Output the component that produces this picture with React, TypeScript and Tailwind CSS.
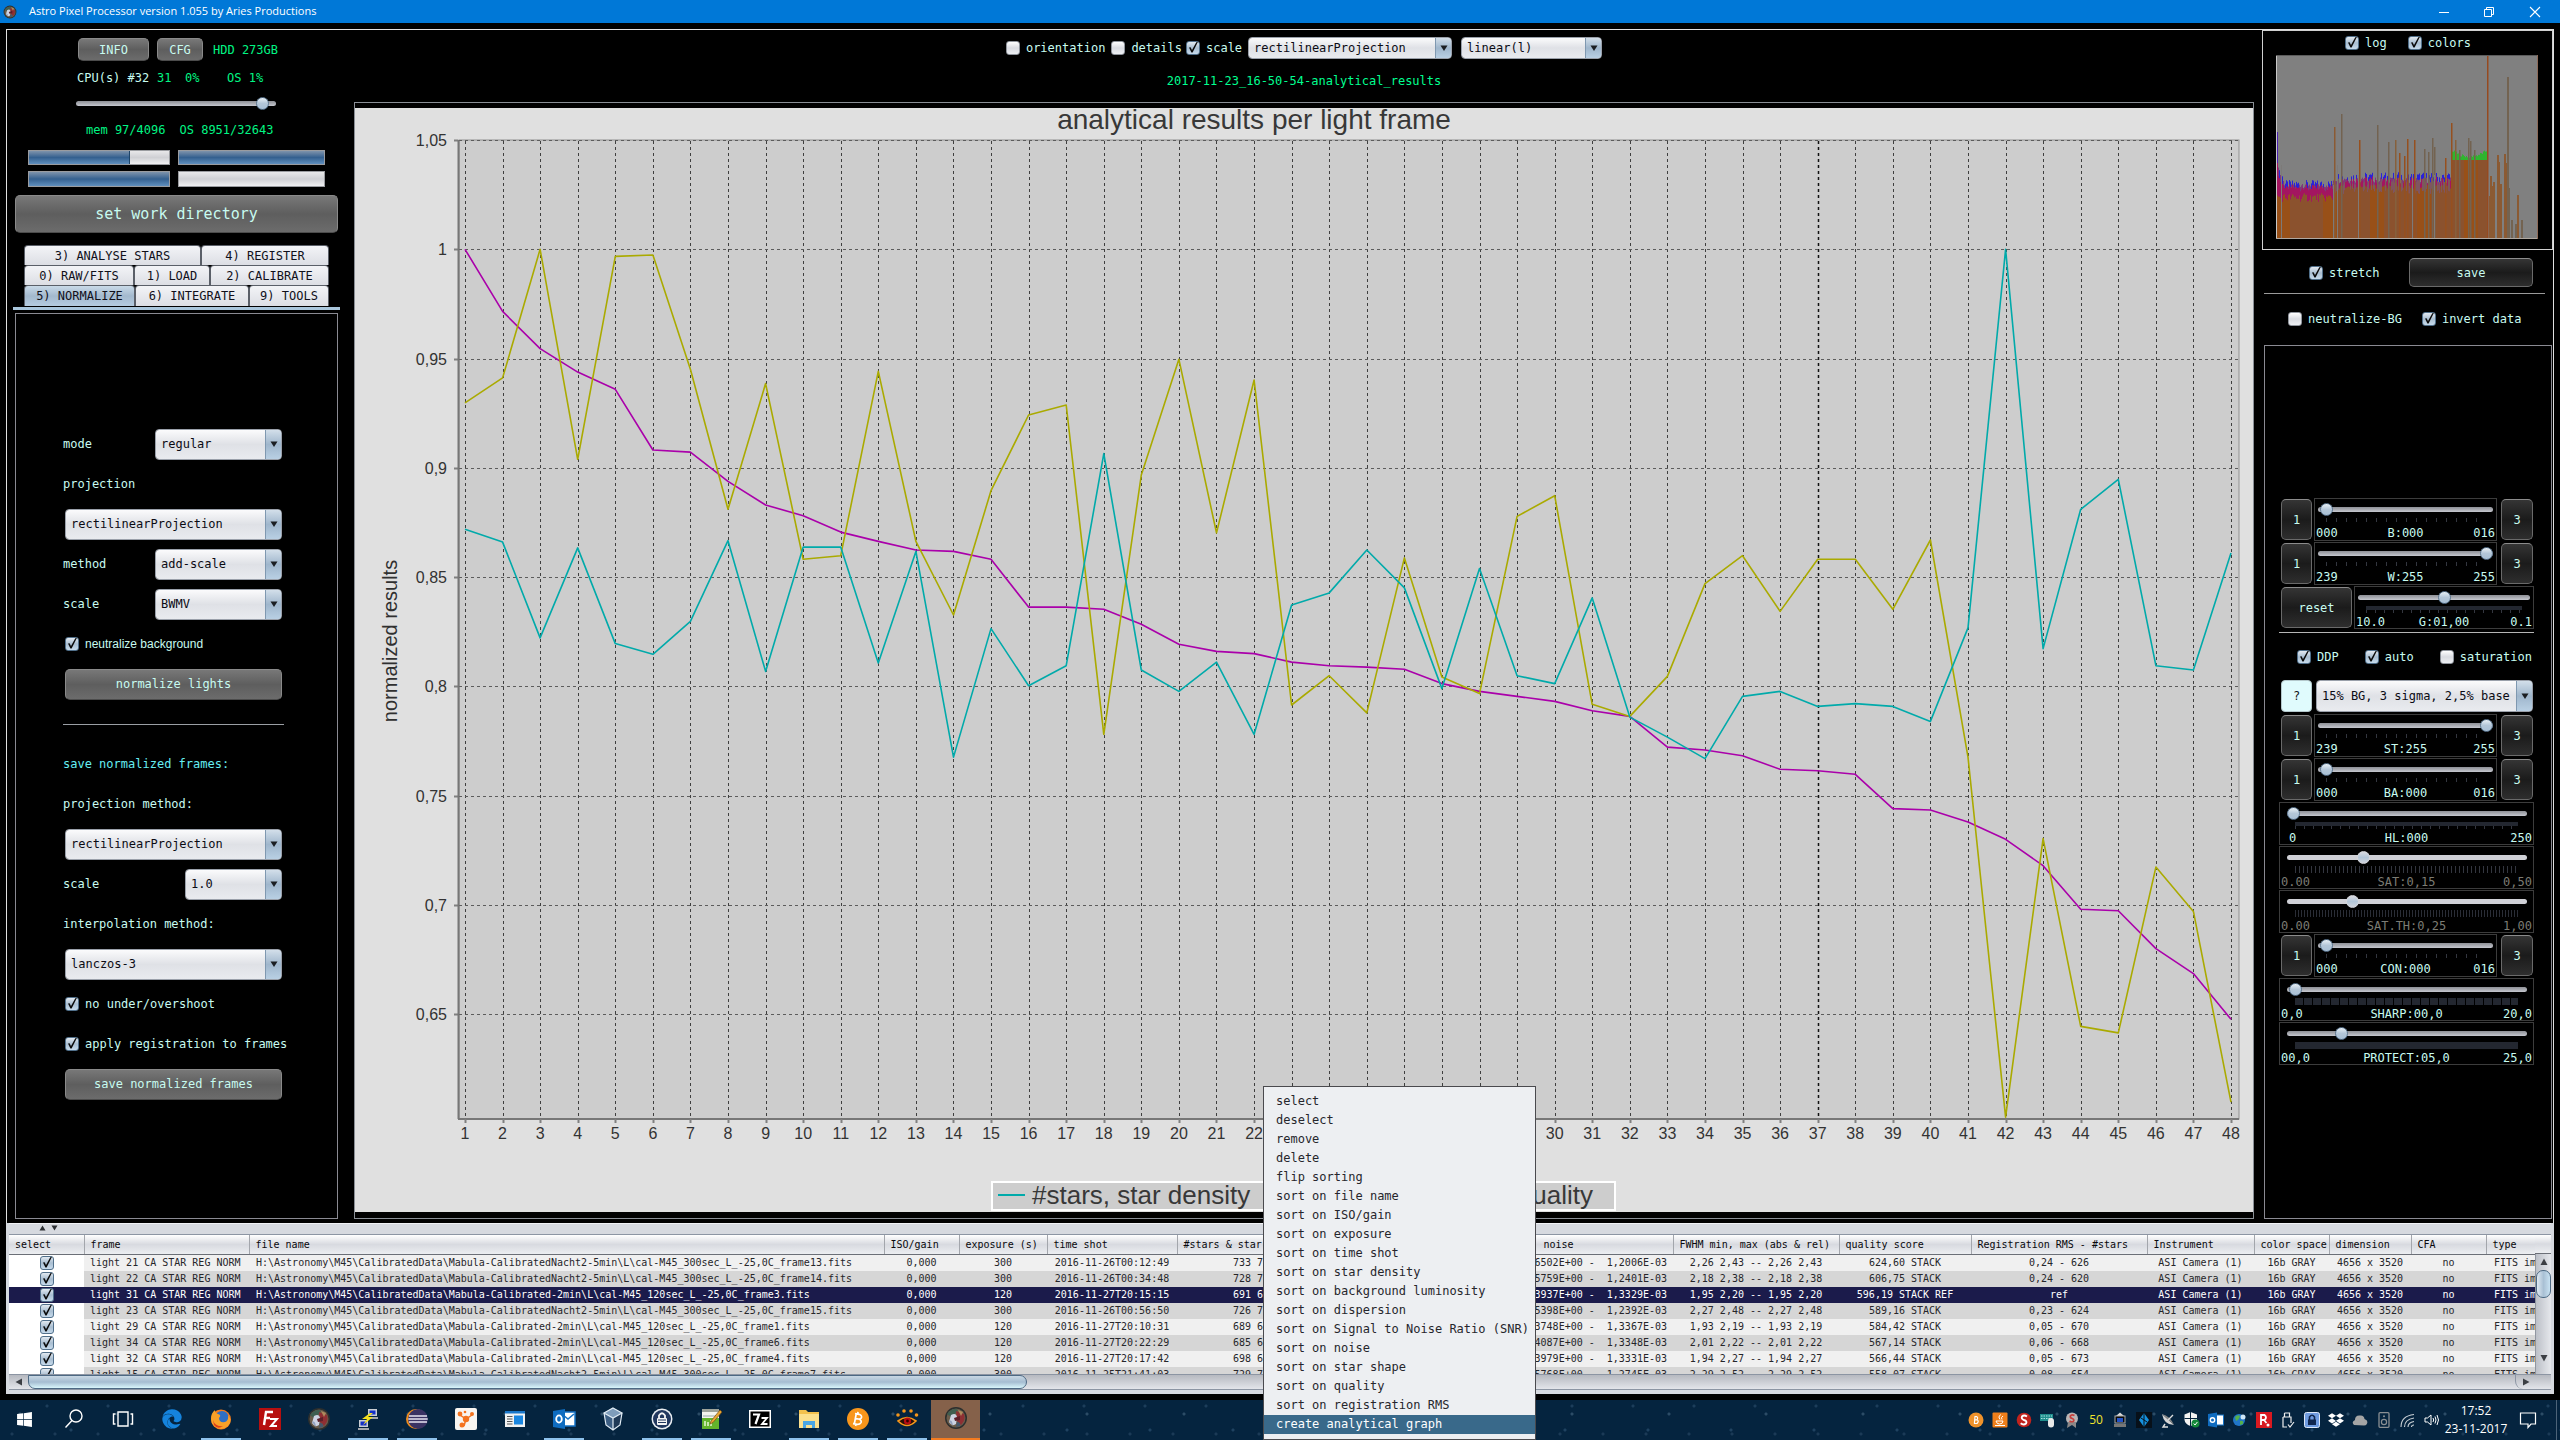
import type { ReactNode } from "react";
import { FaWindows, FaEdge, FaDropbox } from "react-icons/fa";

/* ---------- shared controls ---------- */

const CYAN = "text-[#c8fbf0]";

function Check({ id, label, checked = false, sans = false }: { id: string; label?: string; checked?: boolean; sans?: boolean }) {
  return (
    <label htmlFor={id} className="flex items-center gap-1.5 whitespace-nowrap">
      <span className="relative block size-3.5 shrink-0">
        <input
          id={id}
          type="checkbox"
          defaultChecked={checked}
          aria-label={label ?? id}
          className="peer block size-3.5 appearance-none rounded-[3px] border border-[#8f949c] bg-linear-to-b from-[#ffffff] via-[#d9dbe1] to-[#eef0f4] checked:border-[#51708b] checked:from-[#e3eaf1] checked:via-[#a9bed1] checked:to-[#c7dbec]"
        />
        <svg viewBox="0 0 14 14" className="pointer-events-none absolute inset-0 hidden size-3.5 overflow-visible peer-checked:block">
          <path d="M3 6.5 L4.6 6.2 L6 9 L10.3 1.2 L12 0.8 L6.6 11.5 L5.4 11.5 Z" fill="#0c0c0c" />
        </svg>
      </span>
      {label && (sans ? <span className="font-['Liberation_Sans',sans-serif]">{label}</span> : <span>{label}</span>)}
    </label>
  );
}

function Drop({ id, value, className }: { id: string; value: string; className: string }) {
  return (
    <span className={`relative block overflow-hidden rounded-[4px] border border-[#9aa0aa] ${className}`}>
      <select
        id={id}
        aria-label={id}
        className="block size-full appearance-none bg-linear-to-b from-[#fbfbfc] via-[#dfe1e6] to-[#e9ebef] pl-[5px] text-[#0b0b14] outline-none"
      >
        <option>{value}</option>
      </select>
      <span className="pointer-events-none absolute inset-y-0 right-0 flex w-4 items-center justify-center border-l border-[#7f98b0] bg-linear-to-b from-[#d3dfea] via-[#9fb6cc] to-[#b9d0e4]">
        <svg viewBox="0 0 8 6" className="h-1.5 w-2">
          <path d="M0.5 0.5 H7.5 L4 6 Z" fill="#1b1e22" />
        </svg>
      </span>
    </span>
  );
}

function GrayButton({ children, className }: { children: ReactNode; className: string }) {
  return (
    <button className={`rounded-[5px] border border-[#8a8a8a] border-b-[#4c4c4c] bg-linear-to-b from-[#787878] via-[#5e5e5e] to-[#6c6c6c] ${CYAN} ${className}`}>
      {children}
    </button>
  );
}

function DarkButton({ children, className }: { children: ReactNode; className: string }) {
  return (
    <button className={`shrink-0 rounded-[5px] border border-[#6a6a6a] border-t-[#8c8c8c] bg-linear-to-b from-[#353535] via-[#1b1b1b] to-[#2e2e2e] ${CYAN} ${className}`}>
      {children}
    </button>
  );
}

function Range({ id, value, max = 100, muted = false }: { id: string; value: number; max?: number; muted?: boolean }) {
  return (
    <span className="relative flex h-3.5 w-full items-center">
      <span className={muted ? "h-[5px] w-full rounded-full bg-[#cfd0d6]" : "h-[5px] w-full rounded-full bg-linear-to-b from-[#8e9096] to-[#c5c7cf]"} />
      <input
        id={id}
        type="range"
        min={0}
        max={max}
        defaultValue={value}
        disabled={muted}
        aria-label={id}
        className="absolute inset-0 m-0 h-3.5 w-full appearance-none bg-transparent [&::-webkit-slider-thumb]:size-[13px] [&::-webkit-slider-thumb]:appearance-none [&::-webkit-slider-thumb]:rounded-full [&::-webkit-slider-thumb]:border [&::-webkit-slider-thumb]:border-[#5b7690] [&::-webkit-slider-thumb]:bg-linear-to-b [&::-webkit-slider-thumb]:from-[#e8eff5] [&::-webkit-slider-thumb]:via-[#b3c6d8] [&::-webkit-slider-thumb]:to-[#a9c0d6] disabled:[&::-webkit-slider-thumb]:border-[#d6d7dc] disabled:[&::-webkit-slider-thumb]:from-[#d8dae0] disabled:[&::-webkit-slider-thumb]:to-[#cfd3dc]"
      />
    </span>
  );
}

/* ---------- left column ---------- */

function Tab({ label, width, active = false }: { label: string; width: string; active?: boolean }) {
  return (
    <button
      role="tab"
      aria-selected={active}
      className={`${width} rounded-t-[4px] border border-b-0 border-[#5a5f68] text-[#10101a] ${active ? "bg-linear-to-b from-[#c9dae8] via-[#a3b9ce] to-[#b4cbdf]" : "bg-linear-to-b from-[#f3f4f7] to-[#dcdee4]"}`}
    >
      {label}
    </button>
  );
}

function Progress({ className, fill }: { className: string; fill: string }) {
  return (
    <div className={`border border-[#9a9ca0] bg-linear-to-b from-[#e8e8ea] via-[#cfd0d4] to-[#f0f0f2] ${className}`}>
      <div className={`h-full bg-linear-to-b from-[#7e93ab] via-[#34608f] to-[#5f8fbe] ${fill}`} />
    </div>
  );
}

function Row({ children }: { children: ReactNode }) {
  return <div className="flex h-10 items-center justify-between">{children}</div>;
}

function LeftColumn() {
  return (
    <aside className="flex w-[347px] shrink-0 flex-col">
      <div className="mt-2 ml-[71px] flex h-[23px] items-center">
        <GrayButton className="h-full w-[71px]">INFO</GrayButton>
        <GrayButton className="ml-2 h-full w-[46px]">CFG</GrayButton>
        <span className="ml-2.5 text-[#00f584]">HDD 273GB</span>
      </div>
      <div className="mt-[9px] ml-[70px] flex h-4 items-center text-[#00f584]">
        <span className={`${CYAN} w-20`}>CPU(s) #32</span>
        <span className="w-7">31</span>
        <span className="w-[42px]">0%</span>
        <span>OS 1%</span>
      </div>
      <div className="mt-2.5 ml-[69px] w-[200px]">
        <Range id="cpu-limit" value={96} />
      </div>
      <div className="mt-3 ml-[79px] flex h-4 items-center gap-3.5 text-[#00f584]">
        <span>mem 97/4096</span>
        <span>OS 8951/32643</span>
      </div>
      <div className="mt-3 ml-[21px] flex gap-2">
        <Progress className="h-[15px] w-[142px]" fill="w-[72%] border-r border-[#1d4468]" />
        <Progress className="h-[15px] w-[147px]" fill="w-full" />
      </div>
      <div className="mt-1.5 ml-[21px] flex gap-2">
        <Progress className="h-4 w-[142px]" fill="w-full" />
        <Progress className="h-4 w-[147px]" fill="w-0" />
      </div>
      <GrayButton className="mt-2 ml-2 h-[38px] w-[323px] text-[15px]">set work directory</GrayButton>
      <div role="tablist" className="mt-3 ml-[17px] flex w-[305px] flex-col">
        <div className="flex h-5">
          <Tab label="3) ANALYSE STARS" width="w-[177px]" />
          <Tab label="4) REGISTER" width="flex-1" />
        </div>
        <div className="flex h-5">
          <Tab label="0) RAW/FITS" width="w-[110px]" />
          <Tab label="1) LOAD" width="w-[76px]" />
          <Tab label="2) CALIBRATE" width="flex-1" />
        </div>
        <div className="flex h-[21px]">
          <Tab label="5) NORMALIZE" width="w-[111px]" active />
          <Tab label="6) INTEGRATE" width="w-[114px]" />
          <Tab label="9) TOOLS" width="flex-1" />
        </div>
      </div>
      <div className="mt-px ml-1.5 h-[3px] w-[327px] bg-[#a9c6dc]" />
      <section className={`mt-[3px] mb-1 ml-2 w-[323px] flex-1 border border-[#8a8a92] pt-[110px] pr-[55px] pl-[47px] ${CYAN}`}>
        <Row>
          <label htmlFor="mode">mode</label>
          <Drop id="mode" value="regular" className="h-[31px] w-[127px]" />
        </Row>
        <Row>
          <label htmlFor="projection">projection</label>
        </Row>
        <Row>
          <Drop id="projection" value="rectilinearProjection" className="ml-0.5 h-[31px] flex-1" />
        </Row>
        <Row>
          <label htmlFor="method">method</label>
          <Drop id="method" value="add-scale" className="h-[31px] w-[127px]" />
        </Row>
        <Row>
          <label htmlFor="scale-type">scale</label>
          <Drop id="scale-type" value="BWMV" className="h-[31px] w-[127px]" />
        </Row>
        <div className="ml-0.5 flex h-10 items-center">
          <Check id="neutralize-background" label="neutralize background" checked sans />
        </div>
        <Row>
          <GrayButton className="ml-0.5 h-[31px] flex-1">normalize lights</GrayButton>
        </Row>
        <Row>
          <hr className="-mr-0.5 flex-1 border-[#9a9ea4]" />
        </Row>
        <div className="flex h-10 items-center text-[#66eef2]">save normalized frames:</div>
        <Row>
          <label htmlFor="projection-method">projection method:</label>
        </Row>
        <Row>
          <Drop id="projection-method" value="rectilinearProjection" className="ml-0.5 h-[31px] flex-1" />
        </Row>
        <Row>
          <label htmlFor="scale-factor">scale</label>
          <Drop id="scale-factor" value="1.0" className="h-[31px] w-[97px]" />
        </Row>
        <Row>
          <label htmlFor="interpolation">interpolation method:</label>
        </Row>
        <Row>
          <Drop id="interpolation" value="lanczos-3" className="ml-0.5 h-[31px] flex-1" />
        </Row>
        <div className="ml-0.5 flex h-10 items-center">
          <Check id="no-overshoot" label="no under/overshoot" checked />
        </div>
        <div className="ml-0.5 flex h-10 items-center">
          <Check id="apply-registration" label="apply registration to frames" checked />
        </div>
        <Row>
          <GrayButton className="ml-0.5 h-[31px] flex-1">save normalized frames</GrayButton>
        </Row>
      </section>
    </aside>
  );
}

/* ---------- chart ---------- */

const STARS = [601, 619, 753, 627, 761, 776, 730, 617, 800, 626, 626, 788, 632, 920, 740, 820, 792, 495, 798, 828, 787, 888, 707, 690, 630, 683, 824, 656, 806, 817, 697, 864, 892, 922, 835, 828, 849, 845, 849, 870, 739, 209, 768, 573, 531, 792, 798, 634];
const QUALITY = [209, 296, 348, 381, 405, 490, 493, 534, 567, 582, 605, 618, 630, 632, 643, 710, 710, 713, 734, 762, 772, 775, 787, 792, 794, 797, 817, 828, 835, 842, 855, 863, 906, 910, 918, 937, 939, 944, 992, 994, 1011, 1035, 1072, 1133, 1135, 1188, 1223, 1287];
const NOISE = [424, 389, 209, 503, 219, 217, 377, 573, 397, 643, 638, 380, 618, 721, 547, 441, 427, 888, 525, 363, 606, 392, 847, 806, 858, 641, 808, 831, 583, 554, 846, 863, 807, 677, 638, 716, 643, 643, 713, 616, 920, 1424, 1034, 1297, 1306, 1074, 1136, 1403];

const frameX = (n: number) => 110 + ((n - 1) * 1766) / 47;
const levelY = (u: number) => (u * 5) / 7 - 8;
const line = (data: number[]) => data.map((u, i) => `${frameX(i + 1).toFixed(1)},${levelY(u).toFixed(1)}`).join(" ");

const LEVELS: [string, number][] = [
  ["1,05", 56], ["1", 209], ["0,95", 362], ["0,9", 515], ["0,85", 668],
  ["0,8", 821], ["0,75", 974], ["0,7", 1127], ["0,65", 1280],
];

function Chart() {
  const frames = Array.from({ length: 48 }, (_, i) => i + 1);
  return (
    <svg viewBox="0 0 1898 1104" className="block min-h-0 w-full flex-1 bg-[#e0e0e0] font-['Liberation_Sans',sans-serif]" role="img" aria-label="analytical results per light frame">
      <text x="899" y="21" textAnchor="middle" fontSize="28" fill="#383838">analytical results per light frame</text>
      <rect x="104" y="32" width="1780" height="979" fill="#cdcdcd" stroke="#909090" />
      {frames.map((n) => (
        <line key={n} x1={Math.round(frameX(n)) + 0.5} x2={Math.round(frameX(n)) + 0.5} y1="33" y2="1011" stroke={n === 37 ? "#111111" : "#3f3f3f"} strokeWidth={n === 37 ? 1.5 : 1} strokeDasharray="3 3" />
      ))}
      {LEVELS.map(([t, u]) => (
        <g key={t}>
          <line x1="104" x2="1884" y1={Math.round(levelY(u)) + 0.5} y2={Math.round(levelY(u)) + 0.5} stroke="#5c5c5c" strokeDasharray="3 3" />
          <line x1="99" x2="103" y1={Math.round(levelY(u)) + 0.5} y2={Math.round(levelY(u)) + 0.5} stroke="#808080" strokeWidth="2" />
          <text x="92" y={Math.round(levelY(u)) + 6} textAnchor="end" fontSize="16" fill="#333333">{t}</text>
        </g>
      ))}
      <path d="M103.5 32 V1011 M103 1011 H1884" stroke="#777777" strokeWidth="2" fill="none" />
      {frames.map((n) => (
        <g key={n}>
          <line x1={Math.round(frameX(n)) + 0.5} x2={Math.round(frameX(n)) + 0.5} y1="1011" y2="1015" stroke="#808080" strokeWidth="2" />
          <text x={frameX(n)} y="1031" textAnchor="middle" fontSize="16" fill="#333333">{n}</text>
        </g>
      ))}
      <g fill="none" strokeWidth="1.6" strokeLinejoin="round">
        <polyline points={line(QUALITY)} stroke="#aa00aa" />
        <polyline points={line(NOISE)} stroke="#aaaa00" />
        <polyline points={line(STARS)} stroke="#00aaaa" />
      </g>
      <text transform="translate(42 533) rotate(-90)" textAnchor="middle" fontSize="20" fill="#303030">normalized results</text>
      <rect x="637" y="1074" width="623" height="28" fill="#cdcdcd" stroke="#ffffff" strokeWidth="2" />
      <line x1="643" x2="670" y1="1087" y2="1087" stroke="#00aaaa" strokeWidth="2" />
      <text x="677" y="1096" fontSize="26" fill="#383838">#stars, star density</text>
      <text x="1238" y="1096" fontSize="26" textAnchor="end" fill="#383838">quality</text>
    </svg>
  );
}

function CenterColumn() {
  return (
    <main className="flex min-w-0 flex-1 flex-col">
      <div className={`flex h-9 items-center justify-center ${CYAN}`}>
        <Check id="orientation" label="orientation" />
        <span className="w-1.5" />
        <Check id="details" label="details" />
        <span className="w-1" />
        <Check id="scale" label="scale" checked />
        <Drop id="view-projection" value="rectilinearProjection" className="ml-1.5 h-[22px] w-[204px]" />
        <Drop id="view-mode" value="linear(l)" className="ml-[9px] h-[22px] w-[141px]" />
      </div>
      <p className="mt-[5px] h-5 text-center leading-5 text-[#00ff90]">2017-11-23_16-50-54-analytical_results</p>
      <div className="mt-[11px] mb-1 flex min-h-0 flex-1 flex-col border border-[#8a8f96] pt-[5px] pb-1.5">
        <Chart />
      </div>
    </main>
  );
}

/* ---------- right column ---------- */

const noise = (i: number) => {
  const v = Math.sin(i * 12.9898) * 43758.5453;
  return v - Math.floor(v);
};

const HISTOGRAM_SPIKES: [number, number, string][] = [
  [58, 111, "#8b5a33"], [65, 124, "#736351"], [83, 98, "#96501f"], [101, 113, "#736351"], [112, 96, "#736351"], [119, 98, "#86603c"],
  [123, 85, "#96501f"], [128, 82, "#96501f"], [131, 99, "#96501f"], [138, 98, "#96501f"], [148, 89, "#736351"], [152, 86, "#736351"],
  [156, 100, "#736351"], [158, 91, "#736351"], [169, 80, "#96501f"], [175, 115, "#96501f"], [179, 98, "#86603c"], [183, 88, "#736351"],
  [192, 100, "#736351"], [194, 97, "#736351"], [198, 88, "#736351"], [211, 183, "#964a20"], [214, 62, "#8b5a33"], [217, 56, "#8b5a33"],
  [221, 83, "#8b5a33"], [224, 54, "#8b5a33"], [228, 84, "#8b5a33"], [231, 161, "#736351"], [235, 18, "#736351"], [239, 14, "#736351"],
  [241, 43, "#8b5a33"], [245, 18, "#736351"], [213, 42, "#8b5a33"], [216, 52, "#8b5a33"], [222, 76, "#8b5a33"], [229, 75, "#8b5a33"], [232, 50, "#736351"],
];

function Histogram() {
  const bars: ReactNode[] = [];
  for (let x = 1; x < 211; x++) {
    const a = noise(x);
    const b = noise(x + 400);
    const late = x >= 175;
    const early = x < 57;
    const top = late ? 80 + Math.abs(x - 193) * Math.abs(x - 193) * 0.02 + a * 3 : early ? 50 + a * 8 + (x < 8 ? 40 / x : 0) : 55 + a * 11;
    const base = late ? 78 : early ? 36 + b * 9 : 44 + b * 9;
    const mid = late ? 78 : base + (top - base) * 0.7;
    bars.push(
      <g key={x}>
        <rect x={x} y={183 - top} width="1" height={top} fill={late ? "#2fb52f" : a > 0.5 ? "#2a22d8" : "#7d3a7a"} />
        <rect x={x} y={183 - mid} width="1" height={mid} fill={late ? "#924b22" : early || b > 0.6 ? "#a31560" : "#7f5560"} />
        <rect x={x} y={183 - base} width="1" height={base} fill={x % 47 < 14 ? "#985018" : "#8b522e"} />
      </g>
    );
  }
  return (
    <svg viewBox="0 0 262 184" className="ml-[13px] block h-[184px] w-[262px]" role="img" aria-label="histogram">
      <rect width="262" height="184" fill="#808080" />
      {bars}
      {HISTOGRAM_SPIKES.map(([x, h, c]) => (
        <rect key={x} x={x} y={183 - h} width={x > 211 ? 2 : 1.5} height={h} fill={c} />
      ))}
      <path d="M1.5 77 V108" stroke="#4a1fb0" />
      <path d="M5.5 110 V183 M57.5 130 V183 M61.5 110 V183 M82.5 120 V183 M136.5 120 V183 M158.5 120 V183" stroke="#7d7a78" />
      <path d="M0.5 184 V0" stroke="#c8c8c8" />
      <path d="M0 0.5 H262" stroke="#5c5c5c" />
      <path d="M0 183.5 H262" stroke="#b0a8a0" />
      <path d="M261.5 0 V184" stroke="#8d6a58" />
    </svg>
  );
}

type TickKind = "sparse" | "bar" | "dense" | "denser" | "blocks" | "solid";

function Ticks({ kind }: { kind: TickKind }) {
  if (kind === "solid") return <span className="block h-[7px] bg-[#232730]" />;
  if (kind === "blocks") return <span className="block h-[7px] bg-[repeating-linear-gradient(90deg,#232730_0_8px,transparent_8px_9px)]" />;
  if (kind === "denser") return <span className="block h-[7px] bg-[repeating-linear-gradient(90deg,#2a2d36_0_1px,transparent_1px_3px)]" />;
  if (kind === "dense") return <span className="block h-[7px] bg-[repeating-linear-gradient(90deg,#33363f_0_1px,transparent_1px_4px)]" />;
  if (kind === "bar")
    return (
      <span className="block h-[7px]">
        <span className="block h-1 bg-[#232730]" />
        <span className="block h-[3px] bg-[repeating-linear-gradient(90deg,#33363f_0_1px,transparent_1px_9px)]" />
      </span>
    );
  return <span className="block h-1 bg-[repeating-linear-gradient(90deg,#33363f_0_1px,transparent_1px_10px)]" />;
}

type Slider = { name: string; lo: string; mid: string; hi: string; value: number; ticks: TickKind; muted?: boolean; wide?: boolean };

function SliderBox({ name, lo, mid, hi, value, ticks, muted = false, wide = false }: Slider) {
  return (
    <div className={`flex h-[43px] min-w-0 flex-col border border-[#3c3c3c] ${wide ? "w-full shrink-0" : "flex-1"}`}>
      <div className={`mt-[3px] ${wide ? "pr-1.5 pl-[7px]" : "px-[3px]"}`}>
        <Range id={name} value={value} muted={muted} />
      </div>
      <div className={`mt-0.5 h-[7px] ${wide ? "mx-[15px]" : "mx-[11px]"}`}>
        <Ticks kind={ticks} />
      </div>
      <div className={`mt-0.5 grid h-[14px] grid-cols-[1fr_auto_1fr] items-center px-px leading-[14px] ${muted ? "text-[#7c7c74]" : CYAN}`}>
        <span className={lo.length < 2 ? "pl-2" : ""}>{lo}</span>
        <label htmlFor={name}>{mid}</label>
        <span className="text-right">{hi}</span>
      </div>
    </div>
  );
}

function StepSlider(props: Slider) {
  return (
    <div className="flex items-center pr-px pl-0.5">
      <DarkButton className="h-[41px] w-[31px]">1</DarkButton>
      <span className="w-0.5" />
      <SliderBox {...props} />
      <DarkButton className="ml-1 h-[41px] w-8">3</DarkButton>
    </div>
  );
}

function RightColumn() {
  return (
    <aside className={`flex w-[299px] shrink-0 flex-col ${CYAN}`}>
      <div className="ml-2 border border-[#d0d0d0] pb-2.5">
        <div className="flex h-6 items-center gap-[21px] pl-[82px]">
          <Check id="log" label="log" checked />
          <Check id="colors" label="colors" checked />
        </div>
        <Histogram />
      </div>
      <div className="mt-2 flex h-[29px] items-center justify-between pr-5 pl-[55px]">
        <Check id="stretch" label="stretch" checked />
        <DarkButton className="h-full w-[124px]">save</DarkButton>
      </div>
      <hr className="mt-1.5 mr-2 ml-2.5 border-[#9a9a9a]" />
      <div className="mt-[15px] flex h-5 items-center gap-5 pl-[34px]">
        <Check id="neutralize-bg" label="neutralize-BG" />
        <Check id="invert-data" label="invert data" checked />
      </div>
      <section className="mt-4 mr-px mb-1 ml-2.5 flex flex-1 flex-col gap-px border border-[#8a8a92] pt-[152px] pr-[17px] pl-3.5">
        <StepSlider name="B" lo="000" mid="B:000" hi="016" value={1} ticks="sparse" />
        <StepSlider name="W" lo="239" mid="W:255" hi="255" value={100} ticks="sparse" />
        <div className="flex items-center pl-0.5">
          <DarkButton className="mr-0.5 h-[41px] w-[71px]">reset</DarkButton>
          <SliderBox name="G" lo="10.0" mid="G:01,00" hi="0.1" value={50} ticks="bar" />
        </div>
        <hr className="mt-0.5 border-[#b5b5b5]" />
        <div className="mt-[13px] flex h-5 items-center justify-between pr-0.5 pl-[18px]">
          <Check id="ddp" label="DDP" checked />
          <Check id="auto" label="auto" checked />
          <Check id="saturation" label="saturation" />
        </div>
        <div className="mt-3 mb-px flex h-8 items-center pr-px pl-0.5">
          <button className="h-full w-[31px] rounded-[4px] border border-[#b4c8cc] bg-[#e0fbfd] text-[#101418]">?</button>
          <Drop id="ddp-preset" value="15% BG, 3 sigma, 2,5% base" className="ml-1 h-full flex-1" />
        </div>
        <StepSlider name="ST" lo="239" mid="ST:255" hi="255" value={100} ticks="sparse" />
        <StepSlider name="BA" lo="000" mid="BA:000" hi="016" value={1} ticks="sparse" />
        <SliderBox name="HL" lo="0" mid="HL:000" hi="250" value={0} ticks="bar" wide />
        <SliderBox name="SAT" lo="0.00" mid="SAT:0,15" hi="0,50" value={31} ticks="dense" muted wide />
        <SliderBox name="SAT.TH" lo="0.00" mid="SAT.TH:0,25" hi="1,00" value={26} ticks="denser" muted wide />
        <StepSlider name="CON" lo="000" mid="CON:000" hi="016" value={1} ticks="sparse" />
        <SliderBox name="SHARP" lo="0,0" mid="SHARP:00,0" hi="20,0" value={1} ticks="blocks" wide />
        <SliderBox name="PROTECT" lo="00,0" mid="PROTECT:05,0" hi="25,0" value={21} ticks="solid" wide />
      </section>
    </aside>
  );
}

/* ---------- frame table ---------- */

const COLUMNS: [string, string][] = [
  ["select", "w-[75px]"], ["frame", "w-[165px]"], ["file name", "w-[635px]"], ["ISO/gain", "w-[75px]"], ["exposure (s)", "w-[88px]"],
  ["time shot", "w-[130px]"], ["#stars & star density", "w-[356px]"], ["noise", "w-[140px]"], ["FWHM min, max (abs & rel)", "w-[166px]"],
  ["quality score", "w-[132px]"], ["Registration RMS - #stars", "w-[176px]"], ["Instrument", "w-[107px]"], ["color space", "w-[75px]"],
  ["dimension", "w-[82px]"], ["CFA", "w-[75px]"], ["type", "w-[49px]"],
];

const LONG = "H:\\Astronomy\\M45\\CalibratedData\\Mabula-CalibratedNacht2-5min\\L\\cal-M45_300sec_L_-25,0C_frame";
const SHORT = "H:\\Astronomy\\M45\\CalibratedData\\Mabula-Calibrated-2min\\L\\cal-M45_120sec_L_-25,0C_frame";

const ROWS: string[][] = [
  ["21", LONG + "13", "300", "2016-11-26T00:12:49", "733 7", "6502E+00 -  1,2006E-03", "2,26 2,43 -- 2,26 2,43", "624,60 STACK", "0,24 - 626"],
  ["22", LONG + "14", "300", "2016-11-26T00:34:48", "728 7", "5759E+00 -  1,2401E-03", "2,18 2,38 -- 2,18 2,38", "606,75 STACK", "0,24 - 620"],
  ["31", SHORT + "3", "120", "2016-11-27T20:15:15", "691 6", "3937E+00 -  1,3329E-03", "1,95 2,20 -- 1,95 2,20", "596,19 STACK REF", "ref"],
  ["23", LONG + "15", "300", "2016-11-26T00:56:50", "726 7", "5398E+00 -  1,2392E-03", "2,27 2,48 -- 2,27 2,48", "589,16 STACK", "0,23 - 624"],
  ["29", SHORT + "1", "120", "2016-11-27T20:10:31", "689 6", "3748E+00 -  1,3367E-03", "1,93 2,19 -- 1,93 2,19", "584,42 STACK", "0,05 - 670"],
  ["34", SHORT + "6", "120", "2016-11-27T20:22:29", "685 6", "4087E+00 -  1,3348E-03", "2,01 2,22 -- 2,01 2,22", "567,14 STACK", "0,06 - 668"],
  ["32", SHORT + "4", "120", "2016-11-27T20:17:42", "698 6", "3979E+00 -  1,3331E-03", "1,94 2,27 -- 1,94 2,27", "566,44 STACK", "0,05 - 673"],
  ["15", LONG + "7", "300", "2016-11-25T21:41:03", "729 7", "5768E+00 -  1,2745E-03", "2,29 2,52 -- 2,29 2,52", "558,07 STACK", "0,08 - 654"],
];

function FrameTable() {
  return (
    <section className="mx-1.5 mb-1.5 flex h-[171px] shrink-0 flex-col bg-[#d6d9df] px-[3px] pb-1 text-[10px]">
      <div className="flex h-[9px] shrink-0 items-center border-t border-[#f0f1f4] pl-[30px]">
        <svg viewBox="0 0 20 6" className="h-1.5 w-5">
          <path d="M0.5 5.5 H6.5 L3.5 0.5 Z M12.5 0.5 H18.5 L15.5 5.5 Z" fill="#2c2f33" />
        </svg>
      </div>
      <div className="mt-0.5 flex min-h-0 flex-1 overflow-hidden border-t border-[#8c95a3]">
        <div className="min-w-0 flex-1 overflow-hidden">
          <table className="w-full min-w-[2526px] table-fixed border-collapse whitespace-pre">
            <colgroup>
              {COLUMNS.map(([name, w]) => (
                <col key={name} className={w} />
              ))}
            </colgroup>
            <thead>
              <tr className="h-[19px] bg-linear-to-b from-[#ffffff] via-[#d8dae0] to-[#eceef1]">
                {COLUMNS.map(([name], i) => (
                  <th key={name} className={`overflow-hidden border-r border-b border-r-[#a3a6ac] border-b-[#6b6f77] p-0 text-left font-normal text-[#08080c] last:border-r-0 ${i === 7 ? "pl-2.5" : "pl-1.5"}`}>{name}</th>
                ))}
              </tr>
            </thead>
            <tbody>
              {ROWS.map((r, i) => (
                <tr key={r[0]} className={`h-4 text-center leading-4 ${i === 2 ? "bg-[#1b1b4b] text-white" : i % 2 ? "bg-[#d6d6d6] text-[#26262a]" : "bg-[#f0f0f0] text-[#26262a]"}`}>
                  <td className={`p-0 ${i === 2 ? "" : "bg-white"}`}>
                    <span className="flex justify-center"><Check id={`select frame ${r[0]}`} checked /></span>
                  </td>
                  <td className="overflow-hidden p-0 pl-1.5 text-left">{`light ${r[0]} CA STAR REG NORM`}</td>
                  <td className="overflow-hidden p-0 pl-[7px] text-left">{`${r[1]}.fits`}</td>
                  <td className="p-0">0,000</td>
                  <td className="p-0">{r[2]}</td>
                  <td className="p-0">{r[3]}</td>
                  <td className="p-0 pl-14 text-left">{r[4]}</td>
                  <td className="p-0 pr-1.5 text-right">{r[5]}</td>
                  <td className="p-0">{r[6]}</td>
                  <td className="p-0">{r[7]}</td>
                  <td className="p-0">{r[8]}</td>
                  <td className="p-0">ASI Camera (1)</td>
                  <td className="p-0">16b GRAY</td>
                  <td className="p-0">4656 x 3520</td>
                  <td className="p-0">no</td>
                  <td className="overflow-hidden p-0 pl-2 text-left">FITS image</td>
                </tr>
              ))}
            </tbody>
          </table>
        </div>
        <div className="flex w-4 shrink-0 flex-col items-center">
          <div className="h-[19px] w-full border-b border-[#6b6f77] bg-linear-to-b from-[#ffffff] via-[#d8dae0] to-[#eceef1]" />
          <div className="flex w-full flex-1 flex-col items-center justify-between border-l border-[#9096a0] bg-linear-to-r from-[#bcc0c8] to-[#e6e8ec]">
            <svg viewBox="0 0 8 8" className="mt-1 size-2 shrink-0"><path d="M0.5 7 H7.5 L4 0.5 Z" fill="#3c3f44" /></svg>
            <div className="mt-1 mb-auto h-7 w-full rounded-[7px] border border-[#4d6983] bg-linear-to-r from-[#dfe9f2] via-[#a9c0d4] to-[#c9e2f2]" />
            <svg viewBox="0 0 8 8" className="mb-3 size-2 shrink-0"><path d="M0.5 1 H7.5 L4 7.5 Z" fill="#3c3f44" /></svg>
          </div>
        </div>
      </div>
      <div className="flex h-4 shrink-0 items-stretch border-y border-[#8c95a3] bg-linear-to-b from-[#b6b9c0] to-[#e3e5ea]">
        <span className="flex w-[19px] items-center justify-center">
          <svg viewBox="0 0 8 8" className="size-2"><path d="M7 0.5 V7.5 L0.5 4 Z" fill="#3c3f44" /></svg>
        </span>
        <div className="w-[39.3%] rounded-r-xl rounded-bl-xl border border-[#4d6983] bg-linear-to-b from-[#c9d8e4] via-[#a5bdd1] to-[#d9f6fb]" />
        <span className="mr-4 ml-auto flex w-5 items-center justify-center rounded-bl-lg border-l border-[#8c95a3]">
          <svg viewBox="0 0 8 8" className="size-2"><path d="M1 0.5 V7.5 L7.5 4 Z" fill="#3c3f44" /></svg>
        </span>
      </div>
    </section>
  );
}

/* ---------- context menu ---------- */

const MENU = [
  "select", "deselect", "remove", "delete", "flip sorting", "sort on file name", "sort on ISO/gain", "sort on exposure", "sort on time shot",
  "sort on star density", "sort on background luminosity", "sort on dispersion", "sort on Signal to Noise Ratio (SNR)", "sort on noise",
  "sort on star shape", "sort on quality", "sort on registration RMS", "create analytical graph",
];

function ContextMenu() {
  return (
    <div role="menu" className="absolute bottom-0 left-[1263px] flex w-[273px] flex-col border border-[#4a4a4e] bg-[#edeff2] pt-[5px] pb-[5px]">
      {MENU.map((m, i) => (
        <button key={m} role="menuitem" className={`h-[19px] pl-3 text-left leading-[19px] whitespace-nowrap ${i === MENU.length - 1 ? "bg-[#39698a] text-white" : "text-[#26262c]"}`}>
          {m}
        </button>
      ))}
    </div>
  );
}

/* ---------- taskbar ---------- */

function AppLogo() {
  return (
    <svg viewBox="0 0 24 24" className="size-6">
      <circle cx="12" cy="12" r="11" fill="#2c2f2e" />
      <circle cx="12" cy="12" r="9.5" fill="#6a5c4a" />
      <path d="M3 8 Q9 1 14 4 Q11 9 7 11 Z" fill="#3f5e50" />
      <path d="M12 5 L20 8 Q22 14 17 19 L13 15 Z" fill="#8e2f33" />
      <path d="M14 4 L19 6 L17 10 Z" fill="#b08a5c" />
      <path d="M7 9 Q12 6 13 11 L12 18 Q8 21 5 16 Z" fill="#cdd3e2" />
      <path d="M10 12 L16 10 L16 14 L11 15 Z" fill="#5d1f2a" />
      <path d="M5 15 Q8 13 9 20 Z" fill="#8fa0bd" />
      <path d="M13 16 Q17 16 16 20 L12 21 Z" fill="#46586c" />
    </svg>
  );
}

const G = ({ children }: { children: ReactNode }) => <svg viewBox="0 0 24 24" className="size-6">{children}</svg>;

const TASKS: { name: string; open?: boolean; active?: boolean; icon: ReactNode }[] = [
  { name: "Start", icon: <FaWindows className="size-[17px] text-white" /> },
  { name: "Search", icon: <G><circle cx="14" cy="9" r="6" fill="none" stroke="#fff" strokeWidth="1.4" /><path d="M10 13.5 L3.5 20.5" stroke="#fff" strokeWidth="1.4" /></G> },
  { name: "Task view", icon: <G><path d="M7 5 H17 V19 H7 Z M4.5 7 H2.5 V17 H4.5 M19.5 7 H21.5 V17 H19.5" fill="none" stroke="#fff" strokeWidth="1.4" /></G> },
  { name: "Edge", icon: <FaEdge className="size-5 text-[#1583dc]" /> },
  { name: "Firefox", open: true, icon: <G><circle cx="12" cy="12.5" r="10" fill="#f47b1c" /><circle cx="13" cy="10.5" r="6.6" fill="#2f6fc4" /><path d="M2 12 Q2 6 6 3 Q6 6 9 7 Q13 8 10 11 Q10 16 16 15 Q20 13 19 8 Q24 14 19 19 Q12 25 5 19 Q2 16 2 12Z" fill="#f8a128" /><path d="M4 13 Q6 20 14 19 Q9 23 5 18Z" fill="#dd3f19" /></G> },
  { name: "FileZilla", icon: <G><rect x="1" y="1" width="22" height="22" fill="#b70f0f" /><path d="M6 18 L8 5 H15 M7 11 H12" stroke="#fff" strokeWidth="2.4" fill="none" /><path d="M12 12 H19 L13 19 H19" stroke="#fff" strokeWidth="2" fill="none" /></G> },
  { name: "Pixel Processor", icon: <AppLogo /> },
  { name: "PuTTY", open: true, icon: <G><path d="M12 2 H21 V9 H12 Z M3 13 H12 V20 H3 Z" fill="#c9cdd3" /><path d="M13.5 3.5 H19.5 V7.5 H13.5 Z M4.5 14.5 H10.5 V18.5 H4.5 Z" fill="#1330c8" /><path d="M11 10 H22 V12 H11 Z M2 21 H13 V23 H2 Z" fill="#a4a8ae" /><path d="M14 6 L6 12 H11 L7 18 L17 10 H12 L17 6 Z" fill="#f4e01d" /></G> },
  { name: "Eclipse", open: true, icon: <G><circle cx="11" cy="12" r="10" fill="#ef8d1d" /><circle cx="13" cy="12" r="10" fill="#3a3263" /><path d="M4 9 H22 M3.3 12 H22.7 M4 15 H22" stroke="#e6e4f2" strokeWidth="1.6" /></G> },
  { name: "Origin", icon: <G><rect x="1" y="1" width="22" height="22" rx="2" fill="#f8f5f1" /><path d="M6 8 L12 12 L18 8 M12 12 L10 19" stroke="#f4731f" strokeWidth="1.5" fill="none" /><circle cx="12" cy="12" r="3.2" fill="#f4731f" /><circle cx="6" cy="7" r="2.4" fill="#f4731f" /><circle cx="18" cy="7" r="2" fill="#f4731f" /><circle cx="8" cy="18" r="2.5" fill="#f4731f" /><circle cx="11" cy="5" r="1.3" fill="#f4731f" /></G> },
  { name: "Reader", icon: <G><rect x="2" y="4" width="20" height="16" fill="#f2f2f2" /><rect x="2" y="4" width="20" height="2.5" fill="#1a77c9" /><rect x="11" y="8.5" width="9" height="9" fill="#1a86e0" /><path d="M4 9.5 H9.5 M4 12 H9.5 M4 14.5 H9.5 M4 17 H9.5" stroke="#555" /></G> },
  { name: "Outlook", open: true, icon: <G><rect x="9" y="5" width="14" height="14" fill="#fff" stroke="#1572c6" strokeWidth="1.5" /><path d="M11 8 L16 12 L22 7" stroke="#1572c6" fill="none" strokeWidth="1.6" /><path d="M1 4 L13 2 V22 L1 20 Z" fill="#0f6cc0" /><ellipse cx="7" cy="12" rx="2.8" ry="3.6" stroke="#fff" strokeWidth="1.8" fill="none" /></G> },
  { name: "VirtualBox", icon: <G><path d="M12 1 L21 6 L12 11 L3 6 Z" fill="#7f9dbb" /><path d="M3 6 L12 11 V23 L5 18 Z" fill="#3d5f84" /><path d="M21 6 L12 11 V23 L19 18 Z" fill="#203a57" /><path d="M12 1 L21 6 L12 11 L3 6 Z M12 11 V23 M3 6 L5 18 L12 23 L19 18 L21 6" stroke="#e2edf6" strokeWidth="1.2" fill="none" /></G> },
  { name: "KeePass", open: true, icon: <G><circle cx="12" cy="12" r="10.5" fill="#e9edf2" /><circle cx="12" cy="12" r="9" fill="#22385f" /><rect x="7" y="11" width="10" height="7" rx="1" fill="#f5f5f5" /><path d="M9 11 V8.5 Q12 4 15 8.5 V11" stroke="#f5f5f5" strokeWidth="1.8" fill="none" /><path d="M8 13 H16 M8 15.5 H16" stroke="#22385f" /></G> },
  { name: "Notepad", open: true, icon: <G><rect x="3" y="2" width="17" height="20" fill="#f3f4ee" /><rect x="3" y="2" width="17" height="3" fill="#9ea39a" /><path d="M4 9 H18" stroke="#9aa" /><rect x="3" y="11" width="17" height="11" fill="#63b52c" /><path d="M6 19 V14 M9 19 V15 M12 19 V13" stroke="#e6f8d4" strokeWidth="1.5" /><path d="M21 3 L12 14 L11 17 L14 15.5 L23 5 Z" fill="#e8a733" stroke="#7a4c12" strokeWidth=".7" /></G> },
  { name: "7-Zip", icon: <G><rect x="1" y="3" width="22" height="18" fill="#fff" /><rect x="2.5" y="4.5" width="19" height="15" fill="#000" /><path d="M5 7.5 H11 L7.5 17" stroke="#fff" strokeWidth="2.2" fill="none" /><path d="M13.5 11 H19 L14 17 H19.5" stroke="#fff" strokeWidth="1.8" fill="none" /></G> },
  { name: "Explorer", open: true, icon: <G><path d="M2 3 H9 L11 5 H22 V21 H2 Z" fill="#f2c14e" /><path d="M2 7 H22 V21 H2 Z" fill="#fbe08d" /><path d="M6 21 V14 H18 V21 H15 V18 H9 V21 Z" fill="#4aa6e4" /></G> },
  { name: "Bitcoin", open: true, icon: <G><circle cx="12" cy="12" r="11" fill="#f8961c" /><path d="M9 6.5 L13 7.3 Q16.5 8.5 15.3 11 Q14.3 12.3 12.5 12 Q16 13 15 15.6 Q13.5 18 10 17.2 L7 16.6 M10.2 7 L8.4 16.6 M9.6 11.6 L12.6 12 M12 4.8 L11.6 7 M10 17 L9.6 19" stroke="#fff" strokeWidth="1.7" fill="none" /></G> },
  { name: "IrfanView", open: true, icon: <G><circle cx="3" cy="8" r="1.8" fill="#f5961a" /><circle cx="9" cy="4" r="1.8" fill="#f5961a" /><circle cx="16" cy="4" r="1.8" fill="#f5961a" /><circle cx="21.5" cy="8" r="1.8" fill="#f5961a" /><path d="M3 14 Q12 7 21 14 Q12 23 3 14Z" fill="#2a1008" stroke="#f5961a" strokeWidth="1.6" /><circle cx="12.5" cy="14" r="3.6" fill="#b80d12" /><circle cx="12.5" cy="14" r="1.4" fill="#300" /></G> },
  { name: "Astro Pixel Processor", active: true, icon: <AppLogo /> },
];

const S = ({ children }: { children: ReactNode }) => <svg viewBox="0 0 16 16" className="size-4">{children}</svg>;

const TRAY: [string, ReactNode][] = [
  ["wallet", <S><circle cx="8" cy="8" r="7.5" fill="#f0932b" /><path d="M6.5 4.5 H8.5 Q10.5 5.5 9 7.7 Q11.5 9 9 11.5 H6 M7 4.5 L6.4 11.5 M6.6 7.8 H9" stroke="#fff" strokeWidth="1.2" fill="none" /></S>],
  ["java", <S><rect x="0.5" y="0.5" width="15" height="15" rx="1" fill="#ee7f1b" /><path d="M4 9 H11 Q11 12 7.5 12 Q4.5 12 4 9 M3 13.5 H13 M8.5 2.5 Q5.5 5 8 7.5 M11 4 Q8.5 5.5 10 7.5" stroke="#fff" fill="none" /></S>],
  ["s-net", <S><circle cx="8" cy="8" r="7.3" fill="#c1231d" /><path d="M11 4.5 Q8 2.5 6 4.5 Q5 7 8 8 Q11.5 9 10 11.5 Q7.5 13.5 4.7 11.3" stroke="#fff" strokeWidth="1.9" fill="none" /></S>],
  ["input", <S><rect x="0" y="2" width="13" height="7" fill="#1f8d8c" /><path d="M1 4 H12 M1 6.5 H12" stroke="#a8e0df" strokeDasharray="1.5 1" /><rect x="8" y="6" width="6" height="9.5" rx="3" fill="#e9e9e9" /></S>],
  ["badge", <S><circle cx="8" cy="6.5" r="6" fill="#b9b5b5" /><path d="M4 10 L3 16 L8 13 L12 16 L12 10 Z" fill="#8c8888" /><path d="M10.5 3.5 Q7.5 2 6.3 4 Q6 6 8.3 6.5 Q10.7 7.5 9.5 9.3 Q7.5 10.3 5.5 9" stroke="#c6403c" strokeWidth="1.6" fill="none" /></S>],
  ["temperature", <span className="text-xs text-[#f0e52c]">50</span>],
  ["monitor", <S><path d="M8 0.5 L12 4 H4 Z" fill="#ddd" /><rect x="3" y="4" width="10" height="7" fill="#0a0a0a" stroke="#aaa" /><rect x="5" y="6" width="6" height="4" fill="#2152c9" /><rect x="2" y="12" width="12" height="3" fill="#777" /></S>],
  ["feather", <S><rect width="16" height="16" fill="#071019" /><path d="M8 1 L13 8 L8 15 L3 8 Z" fill="#1590dd" /><path d="M8 1 V15 M5 6 L11 10" stroke="#071019" /></S>],
  ["satellite", <S><path d="M2 2 Q4 13 14 13 Z" fill="#d5d5d5" /><path d="M2 2 Q10 4 14 13" fill="#888" /><path d="M8 8 L13 3 M5 12 L3 15 H8" stroke="#ddd" strokeWidth="1.4" fill="none" /></S>],
  ["defender", <S><path d="M6.5 0 L13 2.5 V8 Q12 12 6.5 14 Q1 12 0.5 8 V2.5 Z" fill="#f3f3f3" /><path d="M6.5 0 V14 M0.5 6.5 H13" stroke="#06243d" /><circle cx="11.5" cy="11.5" r="4" fill="#14893a" /><path d="M9.7 11.5 L11 13 L13.4 10" stroke="#fff" fill="none" /></S>],
  ["outlook", <S><rect x="7" y="3" width="8.5" height="10" fill="#fff" stroke="#1572c6" /><path d="M0 2 L9 0.5 V15.5 L0 14 Z" fill="#0f6cc0" /><circle cx="4.5" cy="8" r="2.2" stroke="#fff" strokeWidth="1.4" fill="none" /></S>],
  ["globe", <S><circle cx="7" cy="8" r="6" fill="#2176c9" /><path d="M3 5 Q6 2 8 4 Q7 8 4 9 Z M8 9 Q12 8 11 12 L8 13 Z" fill="#56b04a" /><circle cx="11" cy="5" r="2.5" fill="#cfe6f8" /></S>],
  ["radeon", <S><rect width="16" height="16" fill="#d81920" /><path d="M5 13 V3 H8.5 Q11.5 5.5 8.5 8 H5 M8 8 L10.5 11" stroke="#fff" strokeWidth="1.8" fill="none" /><circle cx="12" cy="13" r="1.5" fill="#fff" /></S>],
  ["usb", <S><path d="M4.5 1 H9.5 V5 M4.5 1 V5 M3 5 H11 V11 M3 5 V15 H7" stroke="#eee" strokeWidth="1.2" fill="none" /><path d="M8 12.5 L10 15 L14 10" stroke="#eee" strokeWidth="1.2" fill="none" /></S>],
  ["lock", <S><rect x="0.5" y="0.5" width="15" height="15" rx="2" fill="#6f9be0" stroke="#dfe9f8" /><rect x="4" y="7.5" width="8" height="5.5" fill="#10264e" /><path d="M5.5 8 V5 Q8 1.5 10.5 5 V8" stroke="#10264e" strokeWidth="1.6" fill="none" /></S>],
  ["dropbox", <FaDropbox className="size-4 text-white" />],
  ["cloud", <S><path d="M2 13 Q-1 10 3 8 Q3 3 8 3.5 Q12 3 12.5 7 Q17 8.5 14.5 12.5 Q14 13.5 12 13.5 Z" fill="#a5a5a5" /></S>],
  ["speaker box", <S><rect x="3" y="0.7" width="10" height="14.6" rx="1" fill="none" stroke="#8a8f93" strokeWidth="1.3" /><circle cx="8" cy="10" r="2.6" fill="none" stroke="#8a8f93" strokeWidth="1.2" /><circle cx="8" cy="4.2" r="1" fill="#8a8f93" /></S>],
  ["wifi", <S><path d="M1 15 Q1 4 14 2.5 M4.5 15 Q4.5 7.5 14 6 M8 15 Q8 10.5 14 9.5 M11.5 15 Q11.5 13 14 13" stroke="#c9d0d6" strokeWidth="1.1" fill="none" /></S>],
  ["volume", <S><path d="M1 6 H3.5 L7 3 V13 L3.5 10 H1 Z" fill="none" stroke="#fff" /><path d="M9 6 Q10.3 8 9 10 M11 4.5 Q13 8 11 11.5 M13 3 Q16 8 13 13" stroke="#fff" fill="none" /></S>],
];

function Taskbar() {
  return (
    <footer className="flex h-10 shrink-0 items-stretch bg-[#05243f] bg-[radial-gradient(circle_at_20px_14px,#2c4c66_0_1px,transparent_2px),radial-gradient(circle_at_71px_30px,#1f4260_0_1px,transparent_2px),radial-gradient(circle_at_47px_6px,#1c3d5a_0_1px,transparent_2px),radial-gradient(circle_at_12px_34px,#1b3a56_0_1px,transparent_2px)] bg-size-[97px_40px,83px_40px,61px_40px,43px_40px] font-['Open_Sans',sans-serif]">
      <nav className="flex">
        {TASKS.map((t) => (
          <button
            key={t.name}
            aria-label={t.name}
            className={`flex w-[49px] items-center justify-center ${t.active ? "border-b-2 border-[#f47b20] bg-[#85614a]" : ""}`}
          >
            <span className={`flex h-full w-10 items-center justify-center border-b-2 ${t.open ? "border-[#8ec2ec]" : "border-transparent"}`}>{t.icon}</span>
          </button>
        ))}
      </nav>
      <div className="ml-auto flex items-center">
        {TRAY.map(([name, icon]) => (
          <button key={name} aria-label={name} className="flex w-6 items-center justify-center">{icon}</button>
        ))}
        <div className="flex w-16 flex-col items-center text-[12px] leading-[18px] text-white">
          <span>17:52</span>
          <span>23-11-2017</span>
        </div>
        <button aria-label="notifications" className="flex w-10 justify-center">
          <svg viewBox="0 0 18 18" className="size-[18px]"><path d="M1.5 2 H16.5 V13 H12 L9 16.5 V13 H1.5 Z" fill="none" stroke="#fff" strokeWidth="1.2" /></svg>
        </button>
        <span className="ml-2 h-full w-1 border-l border-[#4c6378]" />
      </div>
    </footer>
  );
}

/* ---------- page ---------- */

export default function App() {
  return (
    <div className="relative flex h-screen flex-col overflow-hidden bg-black font-['DejaVu_Sans_Mono','Liberation_Mono',monospace] text-[12px]">
      <header className="flex h-[23px] shrink-0 items-center bg-[#0078d7] pl-[3px] font-['Open_Sans',sans-serif] text-[11px] text-white">
        <span className="flex size-3.5 items-center justify-center [&>svg]:size-3.5"><AppLogo /></span>
        <h1 className="ml-3">Astro Pixel Processor version 1.055 by Aries Productions</h1>
        <div className="ml-auto flex">
          <button aria-label="minimize" className="flex w-[45px] justify-center"><S><path d="M3 8.5 H13" stroke="#fff" /></S></button>
          <button aria-label="restore" className="flex w-[46px] justify-center"><S><path d="M3.5 5.5 H10.5 V12.5 H3.5 Z M5.5 5.5 V3.5 H12.5 V10.5 H10.5" fill="none" stroke="#fff" /></S></button>
          <button aria-label="close" className="mr-0.5 flex w-[46px] justify-center"><S><path d="M3 3 L13 13 M13 3 L3 13" stroke="#fff" strokeWidth="1.1" /></S></button>
        </div>
      </header>
      <div className="mx-1.5 mt-1.5 flex min-h-0 flex-1 border-x border-t border-[#e0e0e0]">
        <LeftColumn />
        <CenterColumn />
        <RightColumn />
      </div>
      <FrameTable />
      <Taskbar />
      <ContextMenu />
    </div>
  );
}
